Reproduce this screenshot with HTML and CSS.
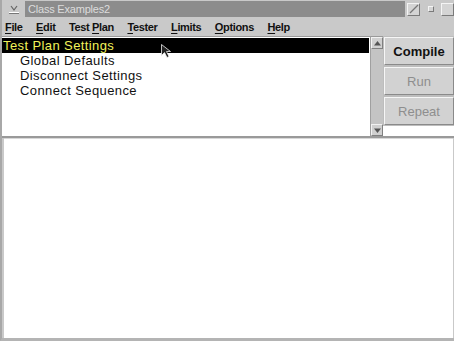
FILE: index.html
```html
<!DOCTYPE html>
<html lang="en">
<head>
  <meta charset="UTF-8">
  <title>Class Examples2</title>
  <link rel="stylesheet" href="styles.css">
</head>
<body>
  <div class="window">
    <div class="titlebar">
      <div class="sysmenu">
        <svg width="12" height="10" viewBox="0 0 12 10">
          <path d="M1 8.5h10" stroke="#fff" stroke-width="1"/>
          <path d="M1 9.5h10" stroke="#777" stroke-width="1"/>
          <path d="M3 2l3 4 3-4" stroke="#666" stroke-width="1.2" fill="none"/>
        </svg>
      </div>
      <div class="title">Class Examples2</div>
      <div class="winbtns">
        <span class="wbtn big slash">
          <svg width="10" height="10" viewBox="0 0 10 10"><path d="M1 9L9 1" stroke="#777" stroke-width="1.2"/></svg>
        </span>
        <span class="wbtn small"></span>
        <span class="wbtn big"></span>
      </div>
    </div>

    <div class="menubar">
      <span class="menu"><u>F</u>ile</span>
      <span class="menu"><u>E</u>dit</span>
      <span class="menu">Test <u>P</u>lan</span>
      <span class="menu"><u>T</u>ester</span>
      <span class="menu"><u>L</u>imits</span>
      <span class="menu"><u>O</u>ptions</span>
      <span class="menu"><u>H</u>elp</span>
    </div>

    <div class="top">
      <div class="list">
        <div class="item selected">Test Plan Settings</div>
        <div class="item child">Global Defaults</div>
        <div class="item child">Disconnect Settings</div>
        <div class="item child">Connect Sequence</div>
        <svg class="cursor" width="10" height="15" viewBox="0 0 10 15">
          <path d="M0.5 0.5v11l3-3 2.5 5 2-1-2.5-5h4z" fill="#222" stroke="#eee" stroke-width="0.8"/>
        </svg>
      </div>
      <div class="scrollbar">
        <div class="arrow">
          <svg width="7" height="5" viewBox="0 0 7 5"><path d="M0 4.5h7L3.5 0z" fill="#555"/></svg>
        </div>
        <div class="trough"></div>
        <div class="arrow">
          <svg width="7" height="5" viewBox="0 0 7 5"><path d="M0 0.5h7L3.5 5z" fill="#555"/></svg>
        </div>
      </div>
      <div class="actions">
        <button class="btn default">Compile</button>
        <button class="btn" disabled>Run</button>
        <button class="btn" disabled>Repeat</button>
      </div>
    </div>

    <div class="output"></div>
  </div>
</body>
</html>
```

FILE: styles.css
```css
:root {
  --face: #c9c9c9;
  --light: #f0f0f0;
  --shadow: #8a8a8a;
  --title: #8c8c8c;
}

html, body {
  margin: 0;
  padding: 0;
}

body {
  width: 454px;
  height: 341px;
  overflow: hidden;
  background-color: var(--face);
  font-family: "Liberation Sans", Arial, sans-serif;
}

.window {
  display: flex;
  flex-direction: column;
  height: 341px;
  box-sizing: border-box;
  border-left: 2px solid #a8a8a8;
  border-bottom: 3px solid #b4b4b4;
}

.titlebar {
  display: flex;
  align-items: center;
  height: 17px;
  padding-top: 1px;
  box-sizing: border-box;
}

.sysmenu {
  width: 23px;
  display: flex;
  justify-content: center;
  align-items: center;
  height: 16px;
}

.title {
  flex: 1;
  height: 16px;
  line-height: 16px;
  background-color: var(--title);
  color: #dcdcdc;
  font-size: 11px;
  padding-left: 3px;
  letter-spacing: -0.2px;
}

.winbtns {
  display: flex;
  align-items: center;
  width: 49px;
  justify-content: space-between;
  padding-left: 2px;
  box-sizing: border-box;
}

.wbtn {
  display: flex;
  align-items: center;
  justify-content: center;
  box-sizing: border-box;
  border: 1px solid;
  border-color: #f4f4f4 #7a7a7a #7a7a7a #f4f4f4;
  background-color: #d4d4d4;
}

.wbtn.big {
  width: 13px;
  height: 13px;
}

.wbtn.small {
  width: 6px;
  height: 6px;
}

.menubar {
  display: flex;
  align-items: center;
  gap: 13.5px;
  height: 19px;
  padding-left: 3px;
  font-size: 11px;
  font-weight: bold;
  letter-spacing: -0.35px;
  color: #111;
}

.menu u {
  text-decoration-thickness: 1px;
  text-underline-offset: 2px;
}

.top {
  display: flex;
  height: 100px;
  border-bottom: 2px solid #9a9a9a;
}

.list {
  position: relative;
  flex: 1;
  background-color: #fff;
  border-top: 1px solid #9a9a9a;
  padding-top: 1px;
  font-size: 13px;
  letter-spacing: 0.4px;
  color: #111;
}

.item {
  height: 15px;
  line-height: 15px;
  padding-left: 1px;
}

.item.selected {
  background-color: #000;
  color: #f2f25a;
  margin-right: 1px;
}

.item.child {
  padding-left: 18px;
}

.cursor {
  position: absolute;
  top: 7px;
  left: 159px;
}

.scrollbar {
  display: flex;
  flex-direction: column;
  width: 12px;
  background-color: #c4c4c4;
  border-left: 1px solid #a0a0a0;
  border-top: 1px solid #9a9a9a;
}

.arrow {
  height: 12px;
  display: flex;
  align-items: center;
  justify-content: center;
  box-sizing: border-box;
  border: 1px solid;
  border-color: #f2f2f2 #808080 #808080 #f2f2f2;
  background-color: #d0d0d0;
}

.trough {
  flex: 1;
}

.actions {
  display: flex;
  flex-direction: column;
  gap: 2px;
  width: 70px;
  padding: 1px 0 0 1px;
  background-color: #fff;
}

.btn {
  height: 28px;
  margin: 0;
  font-family: "Liberation Sans", Arial, sans-serif;
  font-size: 13px;
  background-color: #d2d2d2;
  color: #111;
  border: 1px solid;
  border-color: #f6f6f6 #8a8a8a #8a8a8a #f6f6f6;
  box-shadow: 0 0 0 1px #bdbdbd;
  padding: 0;
}

.btn.default {
  font-weight: bold;
}

.btn:disabled {
  color: #8e8e8e;
}

.output {
  flex: 1;
  background-color: #fff;
  border-top: 1px solid #d8d8d8;
  margin-left: 2px;
  margin-right: 1px;
}
```
